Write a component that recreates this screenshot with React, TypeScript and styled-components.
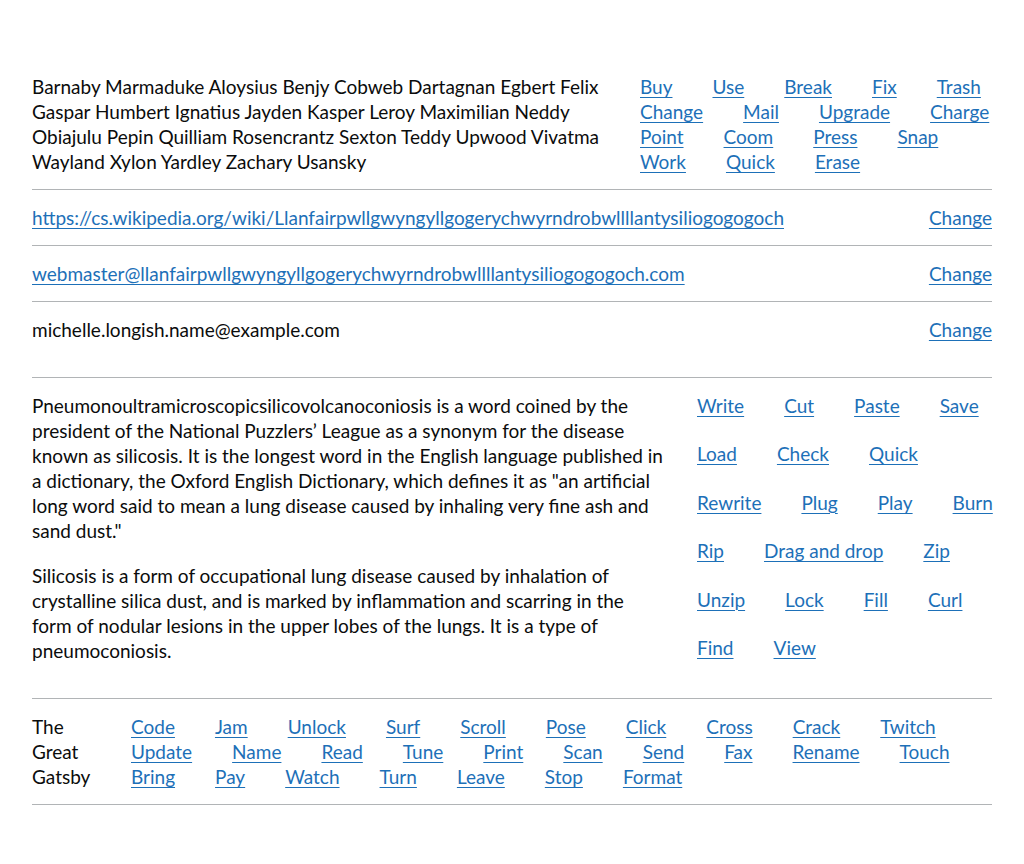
import React from "react";
import styled, { createGlobalStyle } from "styled-components";

const GlobalStyle = createGlobalStyle`
  html, body { margin: 0; padding: 0; background: #ffffff; }
  body {
    font-family: Lato, "Liberation Sans", Arial, sans-serif;
    color: #0b0c0c;
    font-size: 19px;
    line-height: 25px;
  }
`;

const Page = styled.main`
  max-width: 960px;
  margin: 0 auto;
  padding-top: 59px;
`;

const SummaryList = styled.dl`
  margin: 0;
`;

const Row = styled.div<{ $cols: string; $gap?: number }>`
  display: grid;
  grid-template-columns: ${(p) => p.$cols};
  column-gap: ${(p) => p.$gap ?? 20}px;
  align-items: start;
  padding: 15px 0;
  border-bottom: 1px solid #b1b4b6;
`;

const Key = styled.dt`
  margin: 0;
`;

const Value = styled.dd`
  margin: 0;
`;

const Para = styled.p`
  margin: 0 0 20px;
`;

const Link = styled.a`
  color: #1d70b8;
  text-decoration: underline;
  text-decoration-thickness: 1px;
  text-underline-offset: 0.16em;
  white-space: nowrap;
`;

const Actions = styled.dd<{ $rowGap?: number }>`
  margin: 0;
  display: flex;
  flex-wrap: wrap;
  column-gap: 40px;
  row-gap: ${(p) => p.$rowGap ?? 0}px;
`;

const ActionItem = styled.span`
  display: inline-block;
`;

const ActionList = ({ items, rowGap }: { items: string[]; rowGap?: number }) => (
  <Actions $rowGap={rowGap}>
    {items.map((t) => (
      <ActionItem key={t}>
        <Link href="#">{t}</Link>
      </ActionItem>
    ))}
  </Actions>
);

const firstActions = [
  "Buy", "Use", "Break", "Fix", "Trash",
  "Change", "Mail", "Upgrade", "Charge",
  "Point", "Coom", "Press", "Snap",
  "Work", "Quick", "Erase",
];

const secondActions = [
  "Write", "Cut", "Paste", "Save",
  "Load", "Check", "Quick",
  "Rewrite", "Plug", "Play", "Burn",
  "Rip", "Drag and drop", "Zip",
  "Unzip", "Lock", "Fill", "Curl",
  "Find", "View",
];

const gatsbyActions = [
  "Code", "Jam", "Unlock", "Surf", "Scroll", "Pose", "Click", "Cross", "Crack", "Twitch",
  "Update", "Name", "Read", "Tune", "Print", "Scan", "Send", "Fax", "Rename", "Touch",
  "Bring", "Pay", "Watch", "Turn", "Leave", "Stop", "Format",
];

export default function App() {
  return (
    <>
      <GlobalStyle />
      <Page>
        <SummaryList>
          <Row $cols="588px 360px" $gap={20}>
            <Key>
              Barnaby Marmaduke Aloysius Benjy Cobweb Dartagnan Egbert Felix Gaspar Humbert
              Ignatius Jayden Kasper Leroy Maximilian Neddy Obiajulu Pepin Quilliam Rosencrantz
              Sexton Teddy Upwood Vivatma Wayland Xylon Yardley Zachary Usansky
            </Key>
            <ActionList items={firstActions} />
          </Row>

          <Row $cols="1fr auto">
            <Value>
              <Link href="#">
                https://cs.wikipedia.org/wiki/Llanfairpwllgwyngyllgogerychwyrndrobwllllantysiliogogogoch
              </Link>
            </Value>
            <Actions>
              <Link href="#">Change</Link>
            </Actions>
          </Row>

          <Row $cols="1fr auto">
            <Value>
              <Link href="#">
                webmaster@llanfairpwllgwyngyllgogerychwyrndrobwllllantysiliogogogoch.com
              </Link>
            </Value>
            <Actions>
              <Link href="#">Change</Link>
            </Actions>
          </Row>

          <Row $cols="1fr auto">
            <Value>
              <Para>michelle.longish.name@example.com</Para>
            </Value>
            <Actions>
              <Link href="#">Change</Link>
            </Actions>
          </Row>

          <Row $cols="634px 300px" $gap={31}>
            <Value>
              <Para>
                Pneumonoultramicroscopicsilicovolcanoconiosis is a word coined by the president
                of the National Puzzlers’ League as a synonym for the disease known as silicosis.
                It is the longest word in the English language published in a dictionary, the
                Oxford English Dictionary, which defines it as "an artificial long word said to
                mean a lung disease caused by inhaling very fine ash and sand dust."
              </Para>
              <Para>
                Silicosis is a form of occupational lung disease caused by inhalation of
                crystalline silica dust, and is marked by inflammation and scarring in the form of
                nodular lesions in the upper lobes of the lungs. It is a type of pneumoconiosis.
              </Para>
            </Value>
            <ActionList items={secondActions} rowGap={23.4} />
          </Row>

          <Row $cols="72px 1fr" $gap={27}>
            <Key>The Great Gatsby</Key>
            <ActionList items={gatsbyActions} />
          </Row>
        </SummaryList>
      </Page>
    </>
  );
}
